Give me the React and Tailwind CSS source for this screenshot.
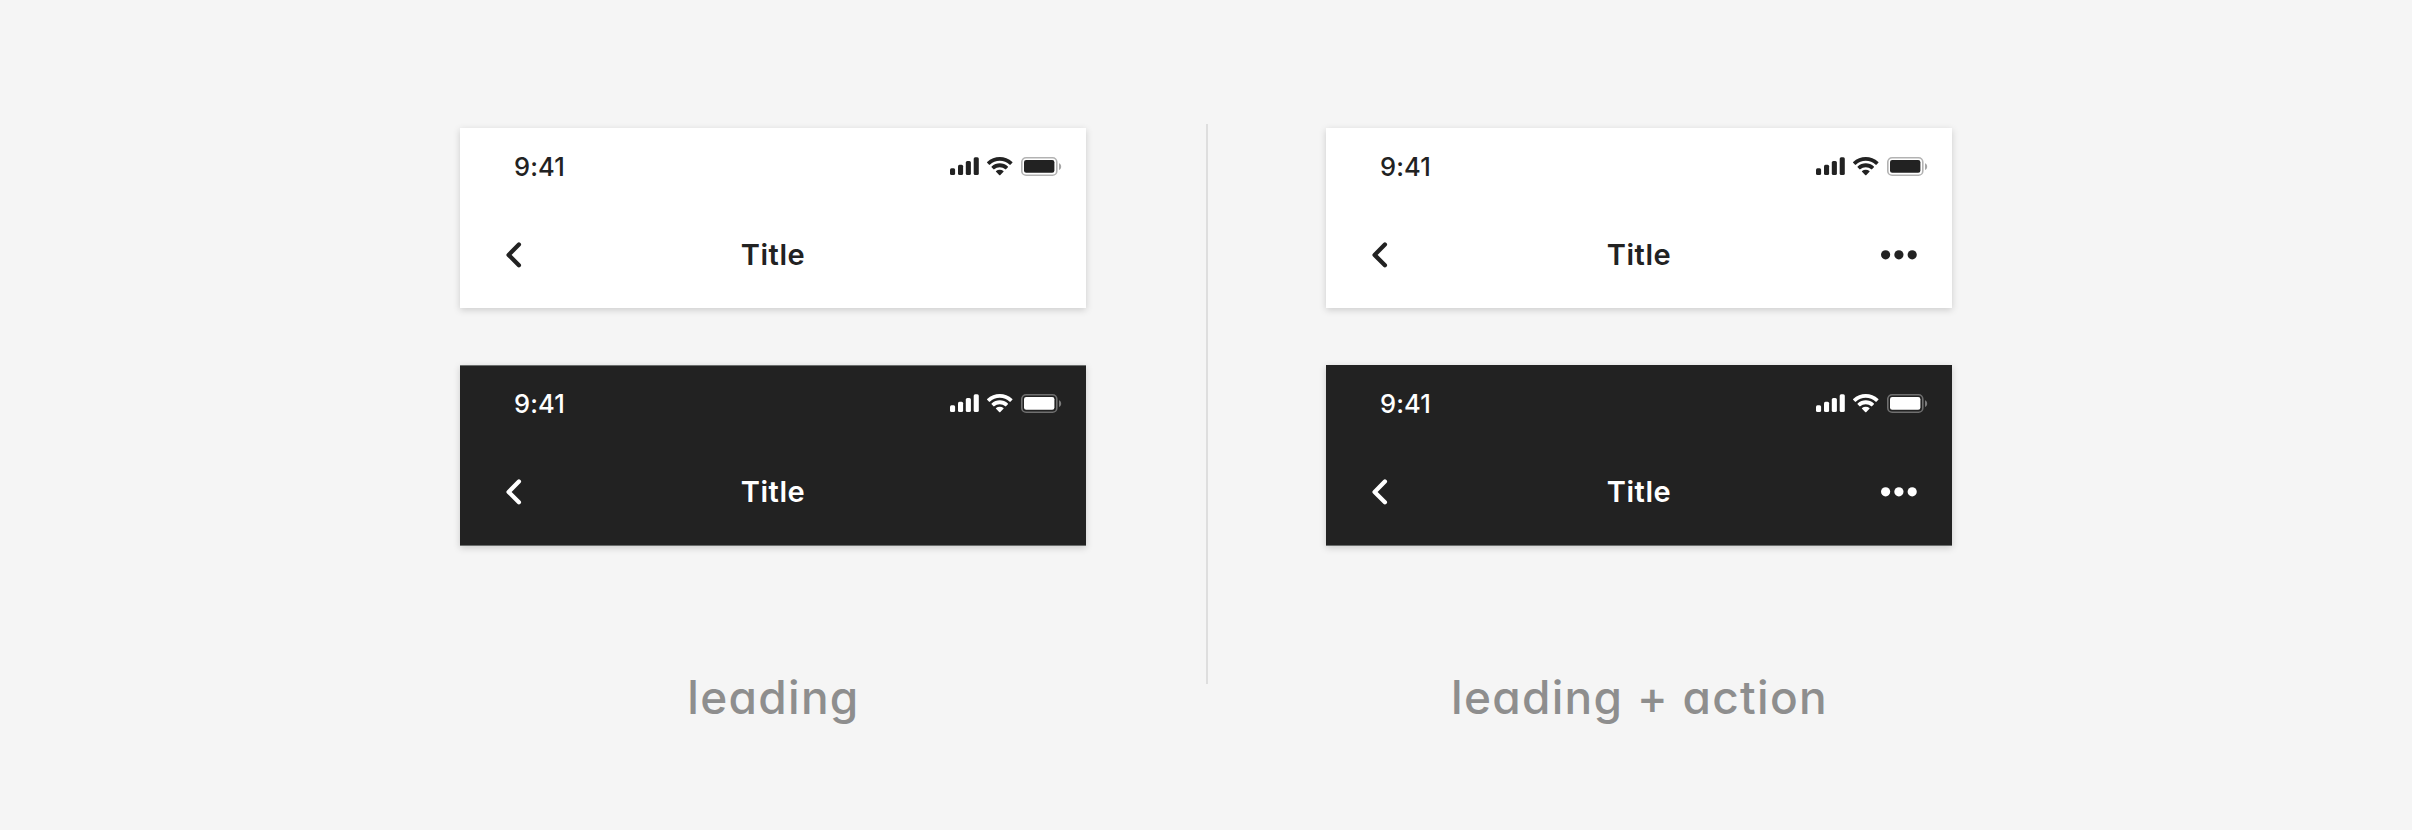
const WIFI =
  'M7.6367 2.2769C9.8525 2.27699 11.9837 3.12838 13.5896 4.6551C13.7105 4.77297 13.9038 4.77149 14.0229 4.65177L15.1789 3.48513C15.2392 3.42441 15.2728 3.34216 15.2723 3.25656C15.2718 3.17096 15.2371 3.08912 15.1761 3.02913C10.9612 -1.00971 4.31137 -1.00971 0.0964754 3.02913C0.0353746 3.08907 0.000665274 3.17089 0.000101062 3.25648C-0.000463151 3.34208 0.033162 3.42435 0.0934218 3.48513L1.24977 4.65177C1.36877 4.77167 1.56216 4.77315 1.68304 4.6551C3.28914 3.12828 5.42057 2.27688 7.6367 2.2769ZM7.6367 6.07248C8.85421 6.07241 10.0283 6.52494 10.9307 7.34215C11.0527 7.45809 11.2449 7.45558 11.3639 7.33649L12.5186 6.16985C12.5794 6.10866 12.6131 6.02565 12.6122 5.93938C12.6113 5.85311 12.5759 5.7708 12.5138 5.71086C9.76577 3.15549 5.50995 3.15549 2.76187 5.71086C2.69975 5.7708 2.66432 5.85315 2.66352 5.93946C2.66272 6.02577 2.6966 6.10876 2.75755 6.16985L3.912 7.33649C4.03098 7.45558 4.2232 7.45809 4.34526 7.34215C5.24701 6.52549 6.42023 6.07299 7.6367 6.07248ZM9.94982 8.62633C9.95158 8.71283 9.91738 8.79625 9.8553 8.85689L7.85778 10.8699C7.79922 10.9291 7.71938 10.9624 7.63609 10.9624C7.5528 10.9624 7.47296 10.9291 7.4144 10.8699L5.41355 8.85689C5.35151 8.79621 5.31737 8.71276 5.31919 8.62626C5.32102 8.53976 5.35864 8.45785 5.42316 8.39988C6.70066 7.3194 8.57152 7.3194 9.84902 8.39988C9.91349 8.4579 9.95106 8.53983 9.94982 8.62633Z'

function StatusIcons() {
  return (
    <svg width="112" height="19" viewBox="0 0 112 19" fill="currentColor">
      <rect x="0" y="11.3" width="5.1" height="6.8" rx="1.5" />
      <rect x="8" y="7.8" width="5.1" height="10.3" rx="1.5" />
      <rect x="15.8" y="4" width="5.1" height="14.1" rx="1.5" />
      <rect x="23.7" y="0.2" width="5.1" height="17.9" rx="1.5" />
      <path d={WIFI} transform="translate(37 0) scale(1.67)" />
      <rect x="71.8" y="0.8" width="35" height="17.4" rx="4.3" fill="none" stroke="currentColor" strokeWidth="1.6" opacity="0.35" />
      <path d="M109 6.3v6.8c1.4-.6 2.2-1.9 2.2-3.4s-.8-2.8-2.2-3.4z" opacity="0.4" />
      <rect x="74" y="3.1" width="30.4" height="12.7" rx="2.2" />
    </svg>
  )
}

function BackIcon() {
  return (
    <svg width="16" height="26" viewBox="0 0 16 26" fill="none" stroke="currentColor" strokeWidth="4.3" strokeLinecap="round" strokeLinejoin="round">
      <path d="M12.9 2.6 2.6 12.9 12.9 23.2" />
    </svg>
  )
}

function MoreIcon() {
  return (
    <svg width="36" height="10" viewBox="0 0 36 10" fill="currentColor">
      <circle cx="4.6" cy="4.8" r="4.6" />
      <circle cx="17.9" cy="4.8" r="4.6" />
      <circle cx="31.2" cy="4.8" r="4.6" />
    </svg>
  )
}

function AppBar({ dark, action }) {
  const tone = dark
    ? `h-[181px] border-y border-b-[#6b6e6d] bg-[#222222] text-white ${action ? 'border-t-[#222222]' : 'border-t-[#6b6e6d]'}`
    : 'h-[180px] bg-white text-[#222222]'
  return (
    <header className={`w-[626px] shadow-[0_2px_7px_rgba(0,0,0,0.17)] ${tone}`}>
      <div className={`flex items-start justify-between pr-[24px] pl-[54px] ${dark ? 'h-[72px] pt-[28px]' : 'h-[73px] pt-[29px]'}`}>
        <span className="h-[19px] text-[25.5px] leading-[19px] font-medium tracking-[0.1px]">9:41</span>
        <StatusIcons />
      </div>
      <div className="grid h-[107px] grid-cols-[1fr_auto_1fr] items-center px-[35px]">
        <div className="pl-[11px]">
          <BackIcon />
        </div>
        <h1 className="text-[29px] leading-[40px] font-semibold tracking-[0.5px]">Title</h1>
        <div className="flex justify-end">{action && <MoreIcon />}</div>
      </div>
    </header>
  )
}

function Variant({ label, action }) {
  return (
    <section className="flex w-[626px] flex-col items-center pt-[4px]">
      <AppBar action={action} />
      <div className="h-[57px]" />
      <AppBar dark action={action} />
      <p className="mt-[119px] pl-[1px] text-[46px] leading-[64px] font-medium tracking-[1.3px] whitespace-nowrap text-[#8e8e8e] [font-feature-settings:'cv11','ss03']">
        {label}
      </p>
    </section>
  )
}

export default function App() {
  return (
    <main className="flex h-[830px] w-[2412px] items-start justify-center bg-[#f5f5f5] pt-[124px] font-[Inter,'Liberation_Sans',sans-serif]">
      <Variant label="leading" />
      <div className="mr-[118px] ml-[120px] h-[560px] w-[2px] shrink-0 bg-[#dedede]" />
      <Variant label="leading + action" action />
    </main>
  )
}
